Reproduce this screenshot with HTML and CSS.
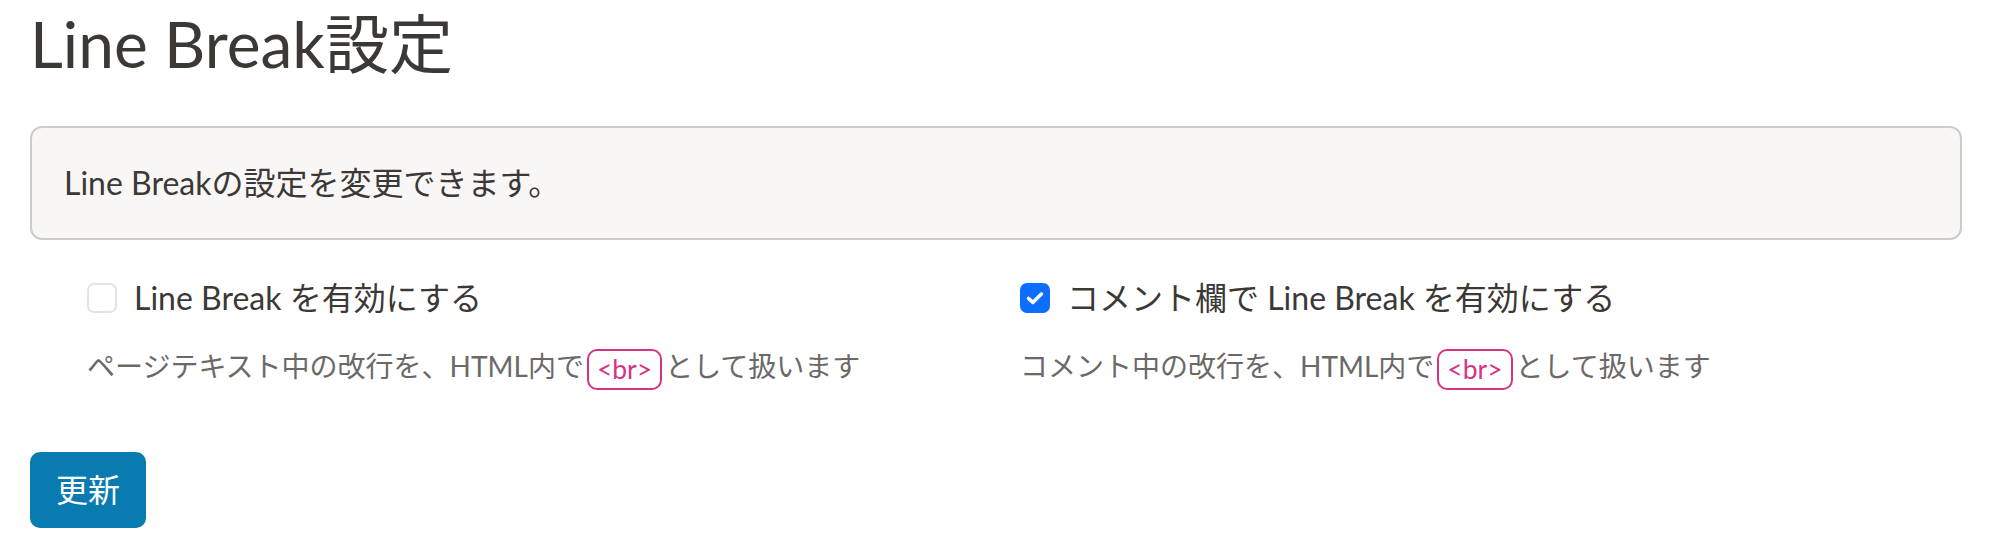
FILE: index.html
```html
<!DOCTYPE html>
<html lang="ja">
<head>
<meta charset="utf-8">
<title>Line Break設定</title>
<link rel="stylesheet" href="styles.css">
</head>
<body>
<div class="page">
  <h1 class="title">Line Break設定</h1>
  <div class="panel">Line Breakの設定を変更できます。</div>
  <div class="options">
    <div class="option">
      <label class="check">
        <span class="box"></span>
        <span class="label">Line Break を有効にする</span>
      </label>
      <p class="desc">ページテキスト中の改行を、HTML内で<code class="tag">&lt;br&gt;</code>として扱います</p>
    </div>
    <div class="option">
      <label class="check">
        <span class="box box-on">
          <svg viewBox="0 0 20 20" width="22" height="22"><path d="M4.2 10.4l3.8 3.6 7.8-7.6" fill="none" stroke="#fff" stroke-width="3.2" stroke-linecap="round" stroke-linejoin="round"/></svg>
        </span>
        <span class="label">コメント欄で Line Break を有効にする</span>
      </label>
      <p class="desc">コメント中の改行を、HTML内で<code class="tag">&lt;br&gt;</code>として扱います</p>
    </div>
  </div>
  <button class="btn" type="button">更新</button>
</div>
</body>
</html>
```

FILE: styles.css
```css
html, body {
  margin: 0;
  padding: 0;
  background: #ffffff;
}

body {
  font-family: Lato, "Noto Sans CJK JP", sans-serif;
  color: #3b3836;
  font-size: 32px;
  line-height: 1.5;
}

.page {
  padding: 0 34px 0 30px;
}

.title {
  font-size: 64px;
  font-weight: 400;
  line-height: 1.2;
  margin: 6px 0 43px;
  color: #3b3836;
}

.panel {
  background: #f8f7f5;
  border: 2px solid #cccccb;
  border-radius: 12px;
  padding: 31px 32px;
  line-height: 48px;
}

.options {
  display: grid;
  grid-template-columns: 933px 1fr;
  padding-left: 57px;
  margin-top: 34px;
}

.check {
  display: flex;
  align-items: center;
  gap: 17px;
  line-height: 48px;
}

.box {
  width: 30px;
  height: 30px;
  box-sizing: border-box;
  border: 2px solid #e3e3e3;
  border-radius: 7px;
  background: #fff;
  display: flex;
  align-items: center;
  justify-content: center;
  flex: none;
}

.box-on {
  background: #0d6efd;
  border-color: #0d6efd;
}

.desc {
  margin: 23px 0 0;
  font-size: 28px;
  line-height: 42px;
  color: #6b6967;
}

.tag {
  display: inline-block;
  font-family: Lato, "Noto Sans CJK JP", sans-serif;
  font-size: 26.5px;
  line-height: 37px;
  color: #d63384;
  border: 2px solid #d63384;
  border-radius: 10px;
  padding: 0 8px;
  margin: 0 3px;
  vertical-align: middle;
}

.btn {
  margin-top: 62px;
  background: #0a7bb0;
  color: #ffffff;
  border: 0;
  border-radius: 10px;
  font-family: Lato, "Noto Sans CJK JP", sans-serif;
  font-size: 32px;
  line-height: 48px;
  padding: 14px 26px;
}
```
